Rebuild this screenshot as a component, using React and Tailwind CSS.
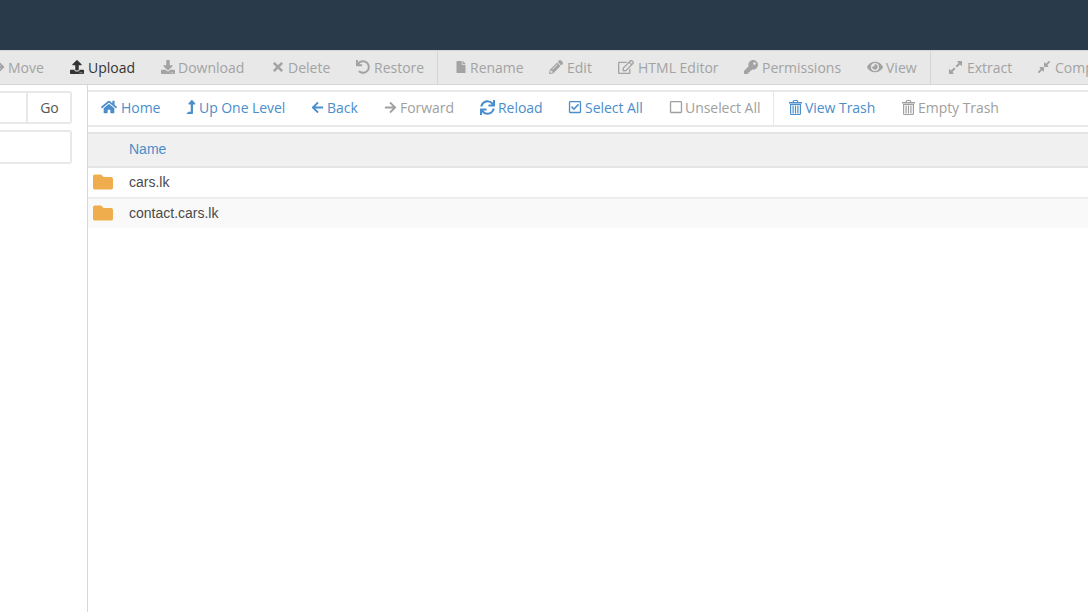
import React from "react";
import { FaUpload, FaDownload, FaTimes, FaUndo, FaFile, FaPencilAlt, FaRegEdit, FaKey, FaEye, FaExpandAlt, FaCompressAlt, FaHome, FaLevelUpAlt, FaArrowLeft, FaArrowRight, FaSync, FaRegCheckSquare, FaRegSquare, FaFolder } from "react-icons/fa";

const Trash = ({ className }) => (
  <svg viewBox="0 0 13 15" className={className} fill="currentColor">
    <path d="M4.5 0h4l1 2H13v1.5H0V2h3.5L4.5 0zm.6 1L4.7 2h3.6l-.4-1H5.1z" />
    <path fillRule="evenodd" d="M1 4h11v9.5c0 .8-.6 1.5-1.4 1.5H2.4C1.6 15 1 14.300 1 13.500V4zm1.200 1v8.500c0 .2.100.4.300.4h8c.2 0 .3-.2.3-.4V5H2.200z" />
    <path d="M3.500 5.500h1.200v8H3.500zM5.900 5.500h1.200v8H5.900zM8.300 5.500h1.200v8H8.300z" />
  </svg>
);

const Tool = ({ icon: I, label, active, w, size = 14, gap = "gap-[4px]", cls = "" }) => (
  <div className={`flex items-center shrink-0 ${gap} ${w} ${active ? "text-[#333333]" : "text-[#a3a3a3]"}`}>
    <I size={size} className={`shrink-0 ${cls}`} />
    <span>{label}</span>
  </div>
);

const Nav = ({ icon: I, label, grey, w, size = 14, gap = "gap-[3px]", cls = "" }) => (
  <div className={`flex items-center shrink-0 ${gap} ${w} ${grey ? "text-[#a0a0a0]" : "text-[#4a8ecb]"}`}>
    <I size={size} className={`shrink-0 ${cls}`} />
    <span>{label}</span>
  </div>
);

const Row = ({ name, className }) => (
  <div className={`shrink-0 flex items-center pl-[5px] font-['Liberation_Sans',sans-serif] text-[#4a4a4a] ${className}`}>
    <FaFolder size={20} className="text-[#f0ad4e] mr-[16px] mb-[2px] shrink-0" />
    <span>{name}</span>
  </div>
);

export default function App() {
  return (
    <div className="w-[1088px] h-[612px] overflow-hidden bg-white flex flex-col font-['Open_Sans',sans-serif] text-[14px]">
      <div className="h-[50px] shrink-0 bg-[#293a4a]" />
      <div className="h-[35px] shrink-0 bg-[#e8e8e8] border-t border-b border-[#d5d5d5] flex items-center overflow-hidden">
        <div className="flex items-center h-full ml-[-7px] whitespace-nowrap pb-[1px]">
          <Tool icon={FaArrowRight} label="Move" w="w-[77px]" size={12} gap="gap-[3px]" />
          <Tool icon={FaUpload} label="Upload" active w="w-[91px]" />
          <Tool icon={FaDownload} label="Download" w="w-[110px]" gap="gap-[3px]" />
          <Tool icon={FaTimes} label="Delete" w="w-[85px]" gap="gap-[3px]" cls="w-[14px]" />
          <Tool icon={FaUndo} label="Restore" w="w-[81px]" />
          <div className="w-px h-[35px] bg-[#d5d5d5] mr-[17px] shrink-0" />
          <Tool icon={FaFile} label="Rename" w="w-[94px]" size={12} gap="gap-[3px]" />
          <Tool icon={FaPencilAlt} label="Edit" w="w-[69px]" />
          <Tool icon={FaRegEdit} label="HTML Editor" w="w-[126px]" size={16} />
          <Tool icon={FaKey} label="Permissions" w="w-[123px]" />
          <Tool icon={FaEye} label="View" w="w-[63px]" size={16} gap="gap-[3px]" />
          <div className="w-px h-[35px] bg-[#d5d5d5] mr-[17px] shrink-0" />
          <Tool icon={FaExpandAlt} label="Extract" w="w-[89px]" size={15} />
          <Tool icon={FaCompressAlt} label="Compress" w="w-[90px]" />
        </div>
      </div>
      <div className="flex flex-1 min-h-0">
        <div className="w-[72px] shrink-0 flex flex-col gap-[6px] mr-[15px] pt-[6px]">
          <div className="h-[33px] bg-white border-2 border-l-0 border-[#e8e8e8] rounded-r-[3px] flex justify-end">
            <div className="w-[44px] pl-[1px] border-l-2 border-[#e8e8e8] flex items-center justify-center text-[#555555]">Go</div>
          </div>
          <div className="h-[34px] bg-white border-2 border-l-0 border-[#e8e8e8] rounded-r-[3px]" />
        </div>
        <div className="flex-1 min-w-0 border-l border-[#d8d8d8] flex flex-col pt-[5px]">
          <div className="h-[37px] shrink-0 border-t-2 border-b-2 border-[#e8e8e8] flex items-center whitespace-nowrap pl-[13px] tracking-[-0.05px]">
            <div className="flex items-center h-full">
              <div className="flex items-center pb-[3px] h-full">
                <Nav icon={FaHome} label="Home" w="w-[85px]" size={16} gap="gap-[4px]" />
                <Nav icon={FaLevelUpAlt} label="Up One Level" w="w-[125px]" cls="w-[10px]" />
                <Nav icon={FaArrowLeft} label="Back" w="w-[73px]" size={13} />
                <Nav icon={FaArrowRight} label="Forward" w="w-[96px]" grey size={13} />
                <Nav icon={FaSync} label="Reload" w="w-[88px]" size={15} />
                <Nav icon={FaRegCheckSquare} label="Select All" w="w-[101px]" />
                <Nav icon={FaRegSquare} label="Unselect All" w="w-[104px]" grey gap="gap-[2px]" />
              </div>
              <div className="w-px h-full bg-[#e8e8e8] mr-[15px] shrink-0" />
              <div className="flex items-center pb-[3px] h-full">
                <Nav icon={Trash} label="View Trash" w="w-[113px]" cls="w-[13px] h-[15px]" />
                <Nav icon={Trash} label="Empty Trash" w="w-[110px]" grey cls="w-[13px] h-[15px]" />
              </div>
            </div>
          </div>
          <div className="mt-[5px] h-[36px] shrink-0 bg-[#f0f0f0] border-t-2 border-b-2 border-[#e4e4e4] flex items-center pl-[41px] pb-[1px] font-['Liberation_Sans',sans-serif] text-[#4a8ecb]">
            Name
          </div>
          <Row name="cars.lk" className="h-[31px] border-b-2 border-[#eeeeee]" />
          <Row name="contact.cars.lk" className="h-[29px] bg-[#f9f9f9]" />
        </div>
      </div>
    </div>
  );
}
